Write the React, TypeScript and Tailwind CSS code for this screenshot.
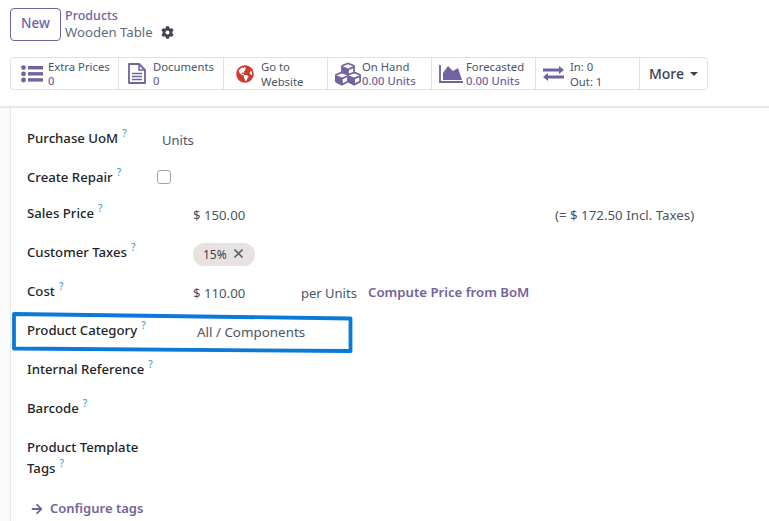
import React from "react";
import { FaCog, FaGlobeAmericas, FaCubes, FaArrowRight } from "react-icons/fa";

const purple = "text-[#71639e]";

function ListIcon() {
  return (
    <svg width="22" height="18" viewBox="0 0 22 18" className={`${purple} shrink-0`} fill="currentColor">
      <circle cx="2.5" cy="2.6" r="2.4" />
      <circle cx="2.5" cy="8.8" r="2.4" />
      <circle cx="2.5" cy="15" r="2.4" />
      <rect x="7" y="1" width="15" height="3.4" />
      <rect x="7" y="7.1" width="15" height="3.4" />
      <rect x="7" y="13.2" width="15" height="3.4" />
    </svg>
  );
}

function FileIcon() {
  return (
    <svg width="18" height="21" viewBox="0 0 18 21" className={`${purple} shrink-0`} fill="none" stroke="currentColor">
      <path d="M1 1H11L17 7V20H1Z" strokeWidth="1.8" strokeLinejoin="round" />
      <path d="M11 1V7H17" strokeWidth="1.5" />
      <path d="M4 10.5H14M4 13.5H14M4 16.5H14" strokeWidth="1.4" />
    </svg>
  );
}

function ChartIcon() {
  return (
    <svg width="24" height="18" viewBox="0 0 24 18" className={`${purple} shrink-0`}>
      <path d="M1 0V17H24" fill="none" stroke="currentColor" strokeWidth="1.8" />
      <path d="M4 15V8L9 1L14 6L19 3L23 15Z" fill="currentColor" />
    </svg>
  );
}

function ExchangeIcon() {
  return (
    <svg width="21" height="15" viewBox="0 0 21 15" className={`${purple} shrink-0`} fill="currentColor">
      <path d="M0 2.5H16V0L21 4L16 8V5.5H0Z" />
      <path d="M21 9.5H5V7L0 11L5 15V12.5H21Z" />
    </svg>
  );
}

function Stat({ w, icon, top, bottom, bottomPurple = true, gap, pl }: { w: string; icon: React.ReactNode; top: string; bottom: string; bottomPurple?: boolean; gap: string; pl: string }) {
  return (
    <div className={`${w} h-full flex items-center ${pl} ${gap} border-r border-[#dee2e6] shrink-0`}>
      {icon}
      <div className={`flex flex-col text-[11.3px] ${bottomPurple ? "leading-[14px] pt-[1px]" : "leading-[15px]"} text-[#4b5563] whitespace-nowrap`}>
        <span>{top}</span>
        <span className={bottomPurple ? `${purple} font-medium` : ""}>{bottom}</span>
      </div>
    </div>
  );
}

function Help() {
  return <sup className="text-[#4f9fcf] text-[10px] font-medium ml-[4px] relative -top-[6px]">?</sup>;
}

function Row({ label, children }: { label: string; children?: React.ReactNode }) {
  return (
    <div className="h-[39px] flex items-center">
      <div className="w-[131px] shrink-0 text-[13.2px] font-medium text-[#212529] whitespace-nowrap relative -top-[2px]">
        {label}
        <Help />
      </div>
      {children}
    </div>
  );
}

export default function App() {
  return (
    <div className="w-[769px] h-[521px] overflow-hidden bg-white relative" style={{ fontFamily: '"Noto Sans", sans-serif' }}>
      <div className="h-[108px] border-b-2 border-[#e5e7eb] pl-[10px] pt-[7px]">
        <div className="flex items-center gap-1">
          <button className={`w-[51px] h-[33px] rounded-[4px] border border-[#71639e] ${purple} text-[13.5px] font-medium pb-[1px]`}>New</button>
          <div className="flex flex-col">
            <span className={`${purple} text-[12.5px] leading-[17px] font-medium`}>Products</span>
            <div className="flex items-center gap-2 text-[#5f6b7a] text-[13.2px] leading-[17px]">
              Wooden Table
              <FaCog className="text-[#3f4650] w-[13px] h-[13px]" />
            </div>
          </div>
        </div>
        <div className="mt-[16px] w-[698px] h-[33px] flex rounded-[4px] border border-[#dee2e6]">
          <Stat w="w-[108px]" icon={<ListIcon />} top="Extra Prices" bottom="0" gap="gap-[5px]" pl="pl-[10px]" />
          <Stat w="w-[105px]" icon={<FileIcon />} top="Documents" bottom="0" gap="gap-[7px]" pl="pl-[9px]" />
          <Stat w="w-[104px]" icon={<FaGlobeAmericas className="text-[#cf3a32] w-[18px] h-[18px] shrink-0" />} top="Go to" bottom="Website" bottomPurple={false} gap="gap-[7px]" pl="pl-[12px]" />
          <Stat w="w-[104px]" icon={<FaCubes className={`${purple} w-[26px] h-[26px] shrink-0`} />} top="On Hand" bottom="0.00 Units" gap="gap-[1px]" pl="pl-[7px]" />
          <Stat w="w-[104px]" icon={<ChartIcon />} top="Forecasted" bottom="0.00 Units" gap="gap-[3px]" pl="pl-[7px]" />
          <Stat w="w-[104px]" icon={<ExchangeIcon />} top="In: 0" bottom="Out: 1" bottomPurple={false} gap="gap-[6px]" pl="pl-[7px]" />
          <div className="flex-1 flex items-center justify-center gap-[6px] text-[14px] font-medium text-[#374151]">
            More
            <span className="w-0 h-0 border-x-[4px] border-x-transparent border-t-[4px] border-t-[#374151]" />
          </div>
        </div>
      </div>

      <div className="absolute left-0 top-[108px] bottom-0 w-[11px] bg-[#f9fafb] border-r border-[#e5e7eb]" />

      <div className="pl-[27px] pt-[13px]">
        <Row label="Purchase UoM">
          <span className="ml-[4px] text-[13px] text-[#4b5563]">Units</span>
        </Row>
        <Row label="Create Repair">
          <span className="-ml-[1px] w-[14px] h-[14px] rounded-[3px] border border-[#9ca3af] block relative -top-[3px]" />
        </Row>
        <div className="-mt-[3px]">
          <Row label="Sales Price">
            <span className="ml-[35px] w-[362px] text-[13.2px] text-[#4b5563]">$ 150.00</span>
            <span className="text-[13.3px] text-[#4b5563]">(= $ 172.50 Incl. Taxes)</span>
          </Row>
        </div>
        <Row label="Customer Taxes">
          <span className="ml-[35px] h-[23px] w-[62px] rounded-full bg-[#e7e1df] flex items-center pl-[10px] gap-[7px] text-[12px] text-[#374151]">
            15%
            <svg width="9" height="9" viewBox="0 0 9 9" className="relative -top-[1px]" fill="none" stroke="#5b6470" strokeWidth="1.6">
              <path d="M0.5 0.5L8.5 8.5M8.5 0.5L0.5 8.5" />
            </svg>
          </span>
        </Row>
        <Row label="Cost">
          <span className="ml-[35px] w-[108px] text-[13.2px] text-[#4b5563]">$ 110.00</span>
          <span className="w-[67px] text-[13px] text-[#4b5563] whitespace-nowrap">per Units</span>
          <span className={`${purple} text-[13.2px] font-semibold relative -top-[1px] whitespace-nowrap`}>Compute Price from BoM</span>
        </Row>
        <Row label="Product Category">
          <span className="ml-[39px] text-[13.4px] text-[#4b5563]">All / Components</span>
        </Row>
        <Row label="Internal Reference" />
        <Row label="Barcode" />
        <div className="pt-[7px] text-[13.2px] font-medium text-[#212529] leading-[21px]">
          <div>Product Template</div>
          <div>Tags<Help /></div>
        </div>
        <div className={`mt-[20px] flex items-center ml-[4px] gap-[7px] ${purple} text-[13px] font-semibold`}>
          <FaArrowRight className="w-[12px] h-[12px]" />
          Configure tags
        </div>
      </div>

      <svg className="absolute left-0 top-0 pointer-events-none" width="769" height="521" viewBox="0 0 769 521" fill="none">
        <path d="M14 314L350.5 318.5V351L14 348.5Z" stroke="#0b79d6" strokeWidth="3.8" strokeLinejoin="round" />
      </svg>
    </div>
  );
}
